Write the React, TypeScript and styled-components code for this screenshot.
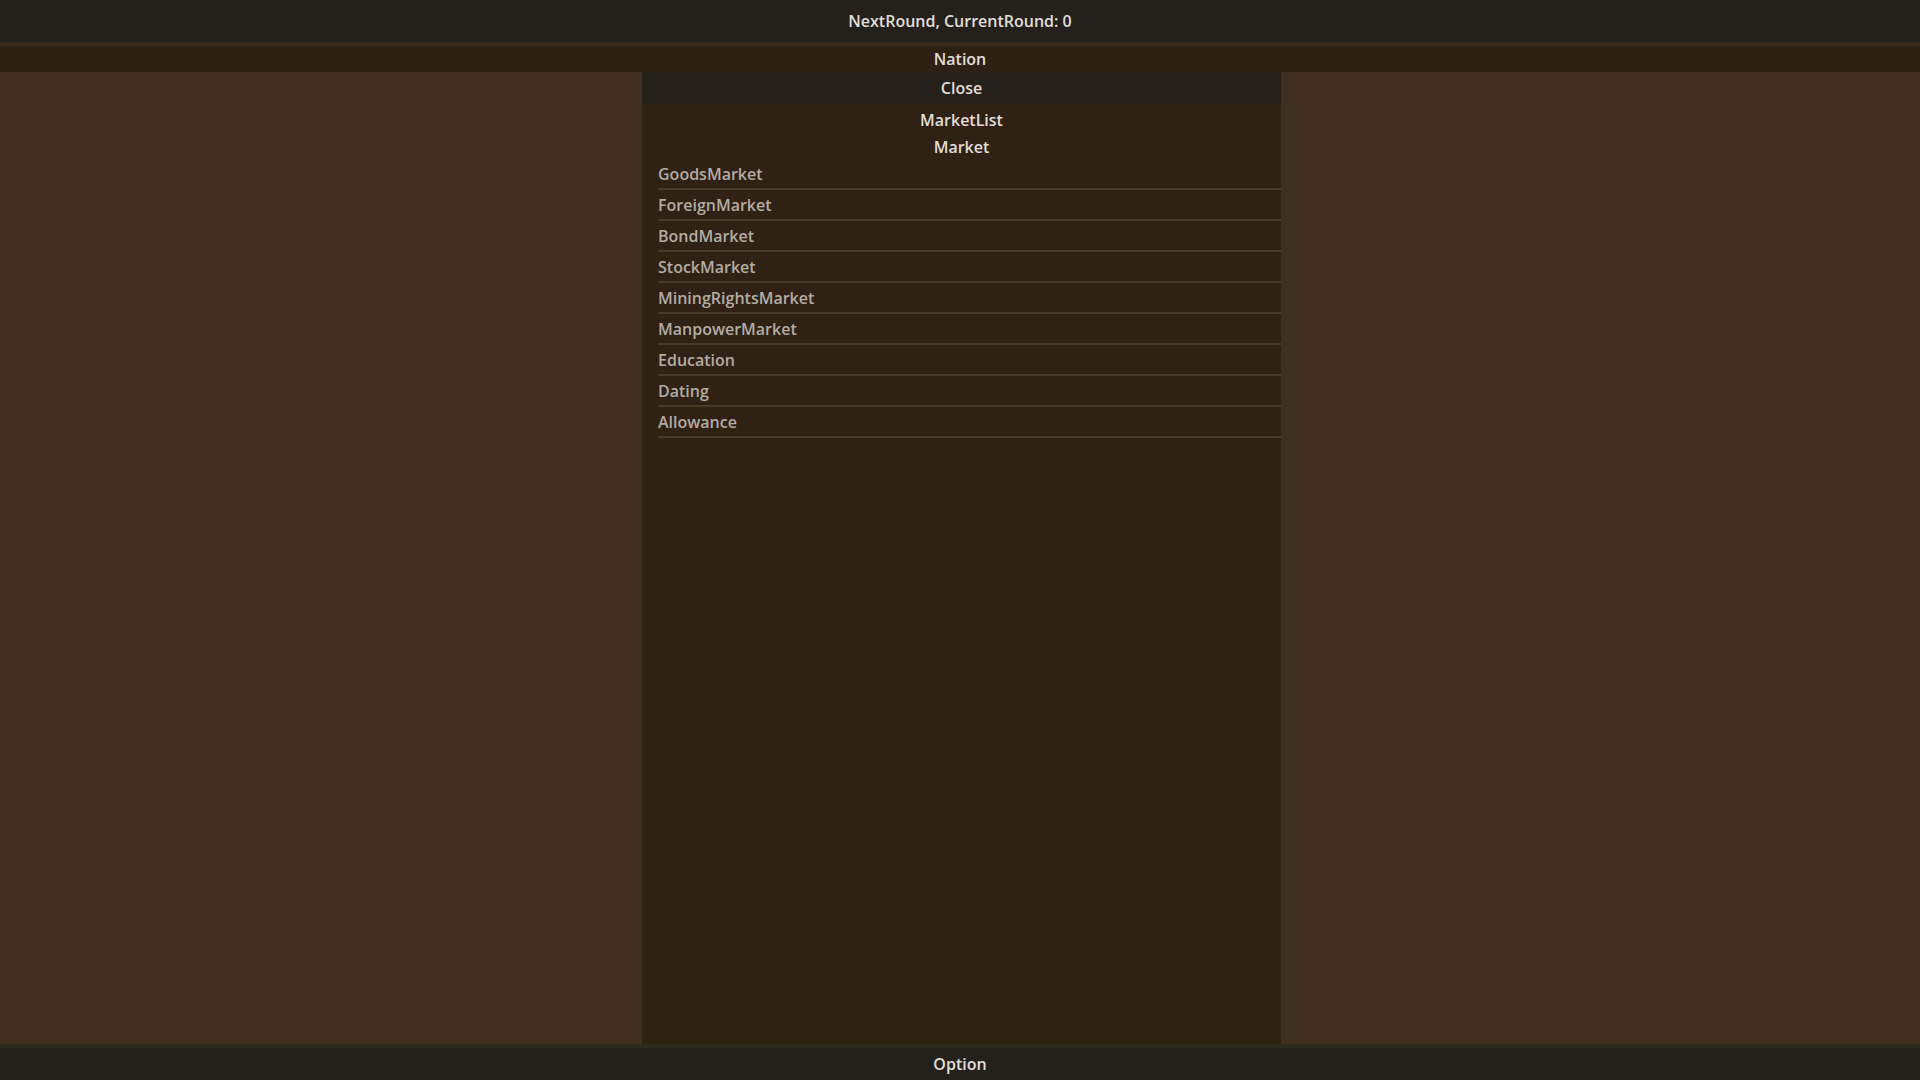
import React from "react";
import styled, { createGlobalStyle } from "styled-components";

const markets = [
  "GoodsMarket",
  "ForeignMarket",
  "BondMarket",
  "StockMarket",
  "MiningRightsMarket",
  "ManpowerMarket",
  "Education",
  "Dating",
  "Allowance",
];

//====////==== COMPONENT ====\\\\====\\
const App = () => {
  return (
    <>
      <Global />
      <Screen>
        <TopBar>NextRound, CurrentRound: 0</TopBar>
        <NationBar>Nation</NationBar>
        <Body>
          <Side />
          <Panel>
            <CloseButton>Close</CloseButton>
            <Title $h={31}>MarketList</Title>
            <Title $h={24}>Market</Title>
            <List>
              {markets.map((m) => (
                <Item key={m}>{m}</Item>
              ))}
            </List>
          </Panel>
          <Side />
        </Body>
        <BottomBar>Option</BottomBar>
      </Screen>
    </>
  );
};

//====////==== STYLES ====\\\\====\\
const Global = createGlobalStyle`
  html, body {
    margin: 0;
    padding: 0;
    background: #3f3022;
    font-family: "Open Sans", "Noto Sans", sans-serif;
    font-weight: 600;
    font-size: 16px;
  }
`;

const Screen = styled.div`
  width: 1920px;
  height: 1080px;
  display: flex;
  flex-direction: column;
  overflow: hidden;
`;

const Bar = styled.div`
  display: flex;
  align-items: center;
  justify-content: center;
  color: #e2ded8;
  flex: none;
`;

const TopBar = styled(Bar)`
  height: 42px;
  background: #24201b;
  border-bottom: 4px solid #3a2a1c;
`;

const NationBar = styled(Bar)`
  height: 25px;
  padding-bottom: 1px;
  background: #2e2114;
`;

const Body = styled.div`
  flex: 1;
  display: grid;
  grid-template-columns: 642px 639px 1fr;
  min-height: 0;
`;

const Side = styled.div`
  background: #3f3022;
`;

const Panel = styled.div`
  background: #2f2113;
  display: flex;
  flex-direction: column;
`;

const CloseButton = styled(Bar)`
  height: 32px;
  background: #252019;
`;

const Title = styled(Bar)<{ $h: number }>`
  height: ${(p) => p.$h}px;
`;

const List = styled.div`
  display: flex;
  flex-direction: column;
  padding-left: 16px;
`;

const Item = styled.div`
  height: 29px;
  display: flex;
  align-items: center;
  color: #b4aca3;
  border-bottom: 2px solid #4a3a2a;
`;

const BottomBar = styled(Bar)`
  height: 32px;
  background: #24211d;
  border-top: 4px solid #2d2a1d;
`;

export default App;
